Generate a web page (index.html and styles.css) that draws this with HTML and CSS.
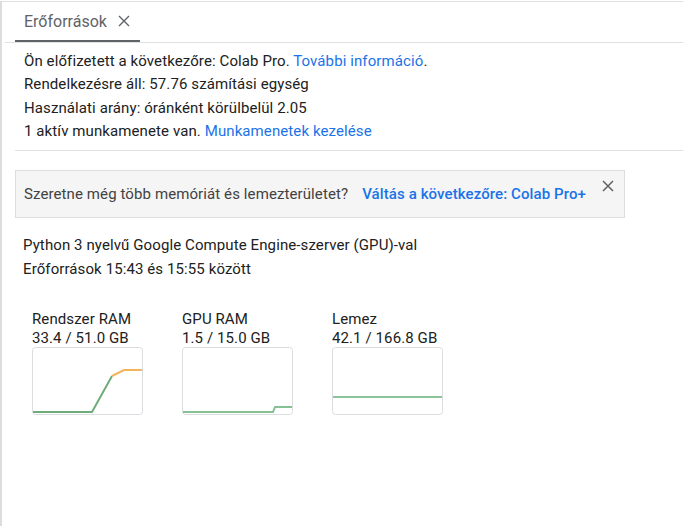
FILE: index.html
```html
<!DOCTYPE html>
<html>
<head>
<meta charset="utf-8">
<link rel="stylesheet" href="styles.css">
</head>
<body>
<div class="panel">
  <div class="tabbar">
    <div class="tab">
      <span class="tab-title">Erőforrások</span>
      <svg class="tab-close" width="12" height="12" viewBox="0 0 12 12"><path d="M1 1L11 11M11 1L1 11" stroke="#5f6368" stroke-width="1.4" fill="none"/></svg>
    </div>
  </div>
  <div class="info">
    <div>Ön előfizetett a következőre: Colab Pro. <a class="link">További információ</a>.</div>
    <div>Rendelkezésre áll: 57.76 számítási egység</div>
    <div>Használati arány: óránként körülbelül 2.05</div>
    <div>1 aktív munkamenete van. <a class="link">Munkamenetek kezelése</a></div>
  </div>
  <div class="banner">
    <span class="banner-text">Szeretne még több memóriát és lemezterületet?</span>
    <a class="banner-link">Váltás a következőre: Colab Pro+</a>
    <svg class="banner-close" width="12" height="12" viewBox="0 0 12 12"><path d="M1 1L11 11M11 1L1 11" stroke="#616161" stroke-width="1.5" fill="none"/></svg>
  </div>
  <div class="server">
    <div>Python 3 nyelvű Google Compute Engine-szerver (GPU)-val</div>
    <div>Erőforrások 15:43 és 15:55 között</div>
  </div>
  <div class="charts">
    <div class="chart">
      <div class="chart-label">Rendszer RAM</div>
      <div class="chart-value">33.4 / 51.0 GB</div>
      <svg class="chart-box" width="111" height="68" viewBox="0 0 111 68">
        <rect x="0.5" y="0.5" width="110" height="67" rx="3" fill="#fff" stroke="#dadce0"/>
        <polyline points="1,65 60,65 80,29" fill="none" stroke="#6fac7c" stroke-width="2"/>
        <polyline points="80,29 92,23 110,23" fill="none" stroke="#f3b45c" stroke-width="2"/>
      </svg>
    </div>
    <div class="chart">
      <div class="chart-label">GPU RAM</div>
      <div class="chart-value">1.5 / 15.0 GB</div>
      <svg class="chart-box" width="111" height="68" viewBox="0 0 111 68">
        <rect x="0.5" y="0.5" width="110" height="67" rx="3" fill="#fff" stroke="#dadce0"/>
        <polyline points="1,65 91,65 93,60 110,60" fill="none" stroke="#86c095" stroke-width="2"/>
      </svg>
    </div>
    <div class="chart">
      <div class="chart-label">Lemez</div>
      <div class="chart-value">42.1 / 166.8 GB</div>
      <svg class="chart-box" width="111" height="68" viewBox="0 0 111 68">
        <rect x="0.5" y="0.5" width="110" height="67" rx="3" fill="#fff" stroke="#dadce0"/>
        <polyline points="1,50 110,50" fill="none" stroke="#8cc49a" stroke-width="2"/>
      </svg>
    </div>
  </div>
</div>
</body>
</html>
```
FILE: styles.css
```css
html, body {
  margin: 0;
  padding: 0;
  background: #fff;
}
body {
  font-family: Roboto, "Liberation Sans", sans-serif;
  font-size: 15px;
  letter-spacing: 0.1px;
  color: #212121;
}
.panel {
  margin-top: 1px;
  border-top: 1px solid #e0e0e0;
  border-left: 2px solid #dcdcdc;
  height: 525px;
  box-sizing: border-box;
}
.tabbar {
  margin-left: 3px;
  height: 40px;
  border-bottom: 1px solid #e0e0e0;
  display: flex;
  align-items: flex-end;
}
.tab {
  margin-left: 10px;
  height: 40px;
  width: 125px;
  box-sizing: border-box;
  padding-left: 9px;
  border-bottom: 2px solid #5f6368;
  display: flex;
  align-items: center;
  gap: 11px;
}
.tab-title {
  color: #5f6368;
  font-size: 16px;
  letter-spacing: 0;
}
.tab-close {
  display: block;
}
.info {
  margin-left: 13px;
  padding: 7px 0 7px 9px;
  line-height: 23.33px;
  border-bottom: 1px solid #e0e0e0;
}
.link {
  color: #1a73e8;
  text-decoration: none;
}
.banner {
  margin: 19px 0 0 13px;
  width: 610px;
  height: 48px;
  box-sizing: border-box;
  background: #f5f5f5;
  border: 1px solid #dddddd;
  display: flex;
  align-items: center;
  padding-left: 8px;
  position: relative;
}
.banner-text {
  color: #424242;
}
.banner-link {
  margin-left: 14px;
  color: #1a73e8;
  font-weight: 500;
}
.banner-close {
  position: absolute;
  right: 10px;
  top: 9px;
}
.server {
  margin: 15px 0 0 21px;
  line-height: 24px;
}
.charts {
  display: flex;
  margin: 28px 0 0 30px;
  gap: 39px;
}
.chart {
  width: 111px;
}
.chart-label, .chart-value {
  white-space: nowrap;
}
.chart-label {
  line-height: 20px;
}
.chart-value {
  line-height: 18px;
}
.chart-box {
  display: block;
}
```
